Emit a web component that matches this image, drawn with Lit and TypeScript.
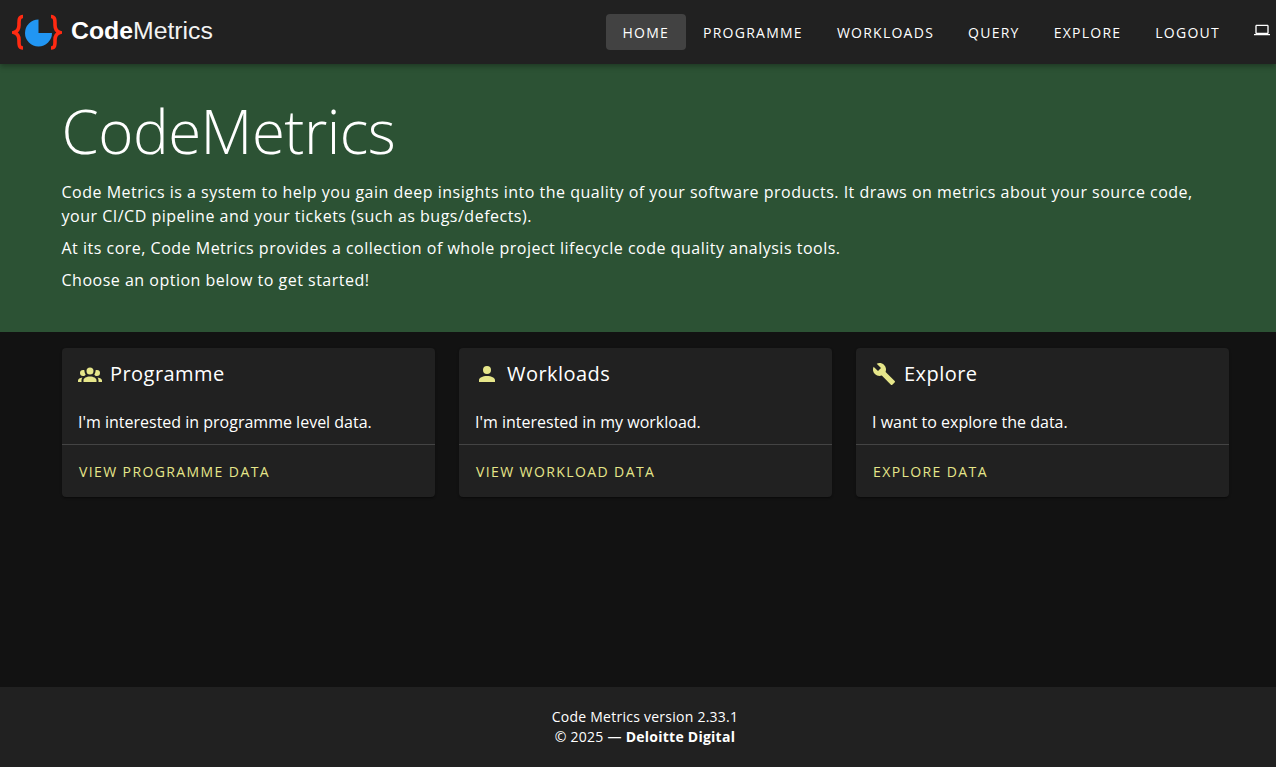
import { LitElement, css, html, svg } from "lit";
import { customElement } from "lit/decorators.js";

const icons = {
  groups: svg`<path d="M12 5.500a3.500 3.500 0 1 1 0 7 3.500 3.500 0 0 1 0-7zM5 8c.56 0 1.080.15 1.530.42-.15 1.430.27 2.850 1.130 3.960C7.160 13.340 6.160 14 5 14a3 3 0 0 1 0-6zm14 0a3 3 0 0 1 0 6c-1.160 0-2.160-.66-2.660-1.620.86-1.110 1.280-2.530 1.130-3.960.45-.27.97-.42 1.530-.42zM5.500 18.250c0-2.070 2.910-3.750 6.500-3.750s6.500 1.680 6.500 3.750V20h-13v-1.750zM0 20v-1.500c0-1.390 1.890-2.560 4.450-2.900-.59.68-.95 1.620-.95 2.650V20H0zm24 0h-3.500v-1.750c0-1.030-.36-1.970-.95-2.650 2.560.34 4.450 1.510 4.450 2.900V20z"/>`,
  person: svg`<path d="M12 4a4 4 0 1 1 0 8 4 4 0 0 1 0-8zm0 10c4.420 0 8 1.790 8 4v2H4v-2c0-2.210 3.580-4 8-4z"/>`,
  wrench: svg`<path d="M22.700 19l-9.100-9.100c.9-2.300.4-5-1.500-6.900-2-2-5-2.400-7.400-1.300L9 6 6 9 1.600 4.700C.4 7.100.9 10.100 2.900 12.100c1.900 1.900 4.600 2.400 6.900 1.500l9.100 9.100c.4.400 1 .4 1.400 0l2.300-2.300c.5-.4.5-1.100.1-1.400z"/>`,
  laptop: svg`<path d="M20 18c1.100 0 2-.9 2-2V6c0-1.110-.9-2-2-2H4c-1.110 0-2 .89-2 2v10c0 1.100.9 2 2 2H0v2h24v-2h-4zM4 6h16v10H4V6z"/>`,
};

const cards = [
  { icon: icons.groups, title: "Programme", body: "I'm interested in programme level data.", action: "View programme data" },
  { icon: icons.person, title: "Workloads", body: "I'm interested in my workload.", action: "View workload data" },
  { icon: icons.wrench, title: "Explore", body: "I want to explore the data.", action: "Explore data" },
];

const navItems = ["Home", "Programme", "Workloads", "Query", "Explore", "Logout"];

@customElement("app-root")
export class AppRoot extends LitElement {
  static styles = css`
    * { box-sizing: border-box; margin: 0; padding: 0; }

    :host {
      display: flex;
      flex-direction: column;
      min-height: 100vh;
      background: #121212;
      color: #fff;
      font-family: "Open Sans", sans-serif;
    }

    .toolbar {
      position: relative;
      z-index: 1;
      height: 64px;
      display: flex;
      align-items: center;
      justify-content: space-between;
      padding: 0 6px 0 12px;
      background: #212121;
      box-shadow: 0 2px 4px -1px rgba(0, 0, 0, .2), 0 4px 5px rgba(0, 0, 0, .14);
    }

    .logo {
      display: flex;
      align-items: center;
      margin-top: -2px;
    }

    .logo svg { width: 50px; height: 38px; display: block; }

    .logo-text {
      margin-left: 9px;
      font: 24.8px "Liberation Sans", Arial, sans-serif;
      color: #f2f2f2;
    }

    .logo-text b { font-weight: 700; color: #fff; }

    nav {
      display: flex;
      align-items: center;
    }

    .nav-item {
      height: 36px;
      padding: 0 17px;
      display: flex;
      align-items: center;
      border-radius: 4px;
      font-size: 14px;
      letter-spacing: 1.25px;
      text-transform: uppercase;
      color: #fff;
    }

    .nav-item.active { background: #424242; padding-left: 16px; }

    .nav-icon {
      width: 16px;
      height: 36px;
      display: flex;
      align-items: center;
      margin-left: 17px;
    }

    .nav-icon svg { width: 16px; height: 16px; fill: #fff; margin-top: -5px; }

    .hero {
      height: 268px;
      padding: 31px 62px 0 61.5px;
      background: #2c5234;
      font-size: 16px;
      line-height: 24px;
      letter-spacing: .5px;
    }

    h1 {
      font-size: 60px;
      font-weight: 300;
      line-height: 72px;
      letter-spacing: -.5px;
      margin-bottom: 13px;
    }

    .hero p { margin-bottom: 8px; }

    .cards {
      display: grid;
      grid-template-columns: repeat(3, 373px);
      gap: 24px;
      padding: 16px 47px 0 62px;
      flex: 1;
      align-content: start;
    }

    .card {
      height: 149px;
      background: #212121;
      border-radius: 4px;
      box-shadow: 0 2px 1px -1px rgba(0, 0, 0, .2), 0 1px 1px rgba(0, 0, 0, .14), 0 1px 3px rgba(0, 0, 0, .12);
    }

    .card-title {
      height: 50px;
      padding: 0 16px;
      display: flex;
      align-items: center;
      gap: 8px;
      font-size: 20px;
      font-weight: 500;
      letter-spacing: .45px;
    }

    .card-title svg { width: 24px; height: 24px; fill: #e6e68a; flex: none; margin-top: 2px; }

    .card-body {
      height: 46px;
      padding: 12px 16px 0;
      font-size: 16px;
      line-height: 24px;
    }

    .card-action {
      height: 53px;
      padding: 0 17px;
      display: flex;
      align-items: center;
      border-top: 1px solid #444;
      font-size: 14px;
      font-weight: 500;
      letter-spacing: 1.4px;
      text-transform: uppercase;
      color: #e6e68a;
    }

    footer {
      height: 80px;
      padding: 20px 0 0 14px;
      background: #212121;
      text-align: center;
      font-size: 14px;
      line-height: 20px;
      letter-spacing: .25px;
    }

    footer b { font-weight: 700; }
  `;

  render() {
    return html`
      <header class="toolbar">
        <div class="logo">
          <svg viewBox="0 0 50 38">
            <path d="M11 4.500C6.500 4.500 7 9 7 13c0 4-1.500 6.500-5 7.500 3.500 1 5 3.500 5 7.500 0 4-.5 8 4 8" fill="none" stroke="#ff2a12" stroke-width="3.600"/>
            <path d="M39 4.500c4.500 0 4 4.500 4 8.500 0 4 1.500 6.500 5 7.500-3.500 1-5 3.500-5 7.500 0 4 .5 8-4 8" fill="none" stroke="#ff2a12" stroke-width="3.600"/>
            <path d="M26.500 7.500V21H40a13.500 13.500 0 1 1-13.500-13.500z" fill="#2196f3"/>
          </svg>
          <span class="logo-text"><b>Code</b>Metrics</span>
        </div>
        <nav>
          ${navItems.map((item, i) => html`<div class="nav-item ${i === 0 ? "active" : ""}">${item}</div>`)}
          <div class="nav-icon"><svg viewBox="0 0 24 24">${icons.laptop}</svg></div>
        </nav>
      </header>
      <section class="hero">
        <h1>CodeMetrics</h1>
        <p>Code Metrics is a system to help you gain deep insights into the quality of your software products. It draws on metrics about your source code, your CI/CD pipeline and your tickets (such as bugs/defects).</p>
        <p>At its core, Code Metrics provides a collection of whole project lifecycle code quality analysis tools.</p>
        <p>Choose an option below to get started!</p>
      </section>
      <main class="cards">
        ${cards.map((c) => html`
          <div class="card">
            <div class="card-title"><svg viewBox="0 0 24 24">${c.icon}</svg>${c.title}</div>
            <div class="card-body">${c.body}</div>
            <div class="card-action">${c.action}</div>
          </div>
        `)}
      </main>
      <footer>
        <div>Code Metrics version 2.33.1</div>
        <div>© 2025 — <b>Deloitte Digital</b></div>
      </footer>
    `;
  }
}
